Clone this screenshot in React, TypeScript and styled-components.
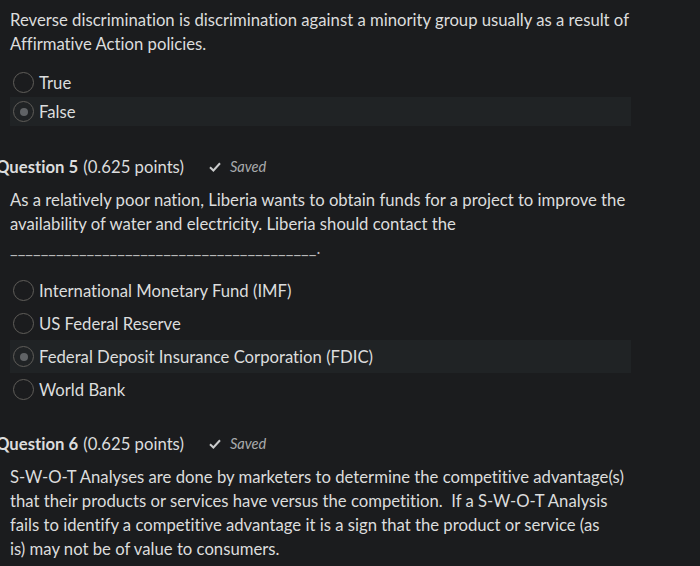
import React from "react";
import styled, { createGlobalStyle } from "styled-components";

const GlobalStyle = createGlobalStyle`
  html, body {
    margin: 0;
    padding: 0;
    background: #1b1c1e;
  }
  body {
    font-family: Lato, "Open Sans", sans-serif;
    font-variant-ligatures: none;
    color: #dcdddd;
    overflow: hidden;
  }
`;

const Page = styled.div`
  width: 621px;
  margin-left: 10px;
  padding-top: 8px;
`;

const QuestionBlock = styled.section<{ gap: number }>`
  margin-bottom: ${(p) => p.gap}px;
`;

const Heading = styled.h3`
  margin: 0 0 9px -14px;
  font-size: 16.7px;
  line-height: 24px;
  font-weight: 700;
  display: flex;
  align-items: center;
`;

const Points = styled.span`
  font-weight: 400;
  margin-left: 5px;
`;

const SavedTag = styled.span`
  display: inline-flex;
  align-items: center;
  margin-left: 25px;
  font-size: 14.6px;
  font-style: italic;
  font-weight: 400;
  color: #a9abad;
  gap: 9px;
`;

const Prompt = styled.p`
  margin: 0;
  font-size: 16.7px;
  line-height: 24px;
`;

const Blank = styled.div`
  font-size: 16.7px;
  line-height: 24px;
  color: #b8b9ba;
  white-space: nowrap;
`;

const Options = styled.div<{ top: number }>`
  margin-top: ${(p) => p.top}px;
  display: flex;
  flex-direction: column;
`;

const OptionRow = styled.label<{ selected: boolean; rowHeight: number }>`
  display: flex;
  align-items: center;
  gap: 5px;
  height: ${(p) => p.rowHeight}px;
  padding-left: 3px;
  font-size: 16.7px;
  background: ${(p) => (p.selected ? "#202325" : "transparent")};
`;

const Radio = styled.span<{ checked: boolean }>`
  box-sizing: border-box;
  width: 21px;
  height: 21px;
  border-radius: 50%;
  border: 1.5px solid #5f5d59;
  display: flex;
  align-items: center;
  justify-content: center;
  flex-shrink: 0;
  &::after {
    content: "";
    display: ${(p) => (p.checked ? "block" : "none")};
    width: 8px;
    height: 8px;
    border-radius: 50%;
    background: #606366;
  }
`;

const Check = () => (
  <svg width="12" height="10" viewBox="0 0 12 10" fill="none">
    <path d="M1 5.2 L4.4 8.5 L11 1.3" stroke="#cacbcc" strokeWidth="2" />
  </svg>
);

interface Opt {
  label: string;
  selected?: boolean;
}

const OptionList: React.FC<{ items: Opt[]; rowHeight: number; top: number }> = ({
  items,
  rowHeight,
  top,
}) => (
  <Options top={top}>
    {items.map((o) => (
      <OptionRow key={o.label} selected={!!o.selected} rowHeight={rowHeight}>
        <Radio checked={!!o.selected} />
        {o.label}
      </OptionRow>
    ))}
  </Options>
);

const QuestionHeading: React.FC<{ n: number }> = ({ n }) => (
  <Heading>
    Question {n}
    <Points>(0.625 points)</Points>
    <SavedTag>
      <Check />
      Saved
    </SavedTag>
  </Heading>
);

export default function App() {
  return (
    <>
      <GlobalStyle />
      <Page>
        <QuestionBlock gap={29}>
          <Prompt>
            Reverse discrimination is discrimination against a minority group usually as a
            result of Affirmative Action policies.
          </Prompt>
          <OptionList
            top={12}
            rowHeight={29}
            items={[{ label: "True" }, { label: "False", selected: true }]}
          />
        </QuestionBlock>

        <QuestionBlock gap={26}>
          <QuestionHeading n={5} />
          <Prompt>
            As a relatively poor nation, Liberia wants to obtain funds for a project to improve
            the availability of water and electricity. Liberia should contact the
          </Prompt>
          <Blank>{"_".repeat(40) + "."}</Blank>
          <OptionList
            top={14}
            rowHeight={33}
            items={[
              { label: "International Monetary Fund (IMF)" },
              { label: "US Federal Reserve" },
              { label: "Federal Deposit Insurance Corporation (FDIC)", selected: true },
              { label: "World Bank" },
            ]}
          />
        </QuestionBlock>

        <QuestionBlock gap={0}>
          <QuestionHeading n={6} />
          <Prompt>
            S-W-O-T Analyses are done by marketers to determine the competitive advantage(s)
            that their products or services have versus the competition.&nbsp; If a S-W-O-T
            Analysis fails to identify a competitive advantage it is a sign that the product or
            service (as
            <br />
            is) may not be of value to consumers.
          </Prompt>
        </QuestionBlock>
      </Page>
    </>
  );
}
